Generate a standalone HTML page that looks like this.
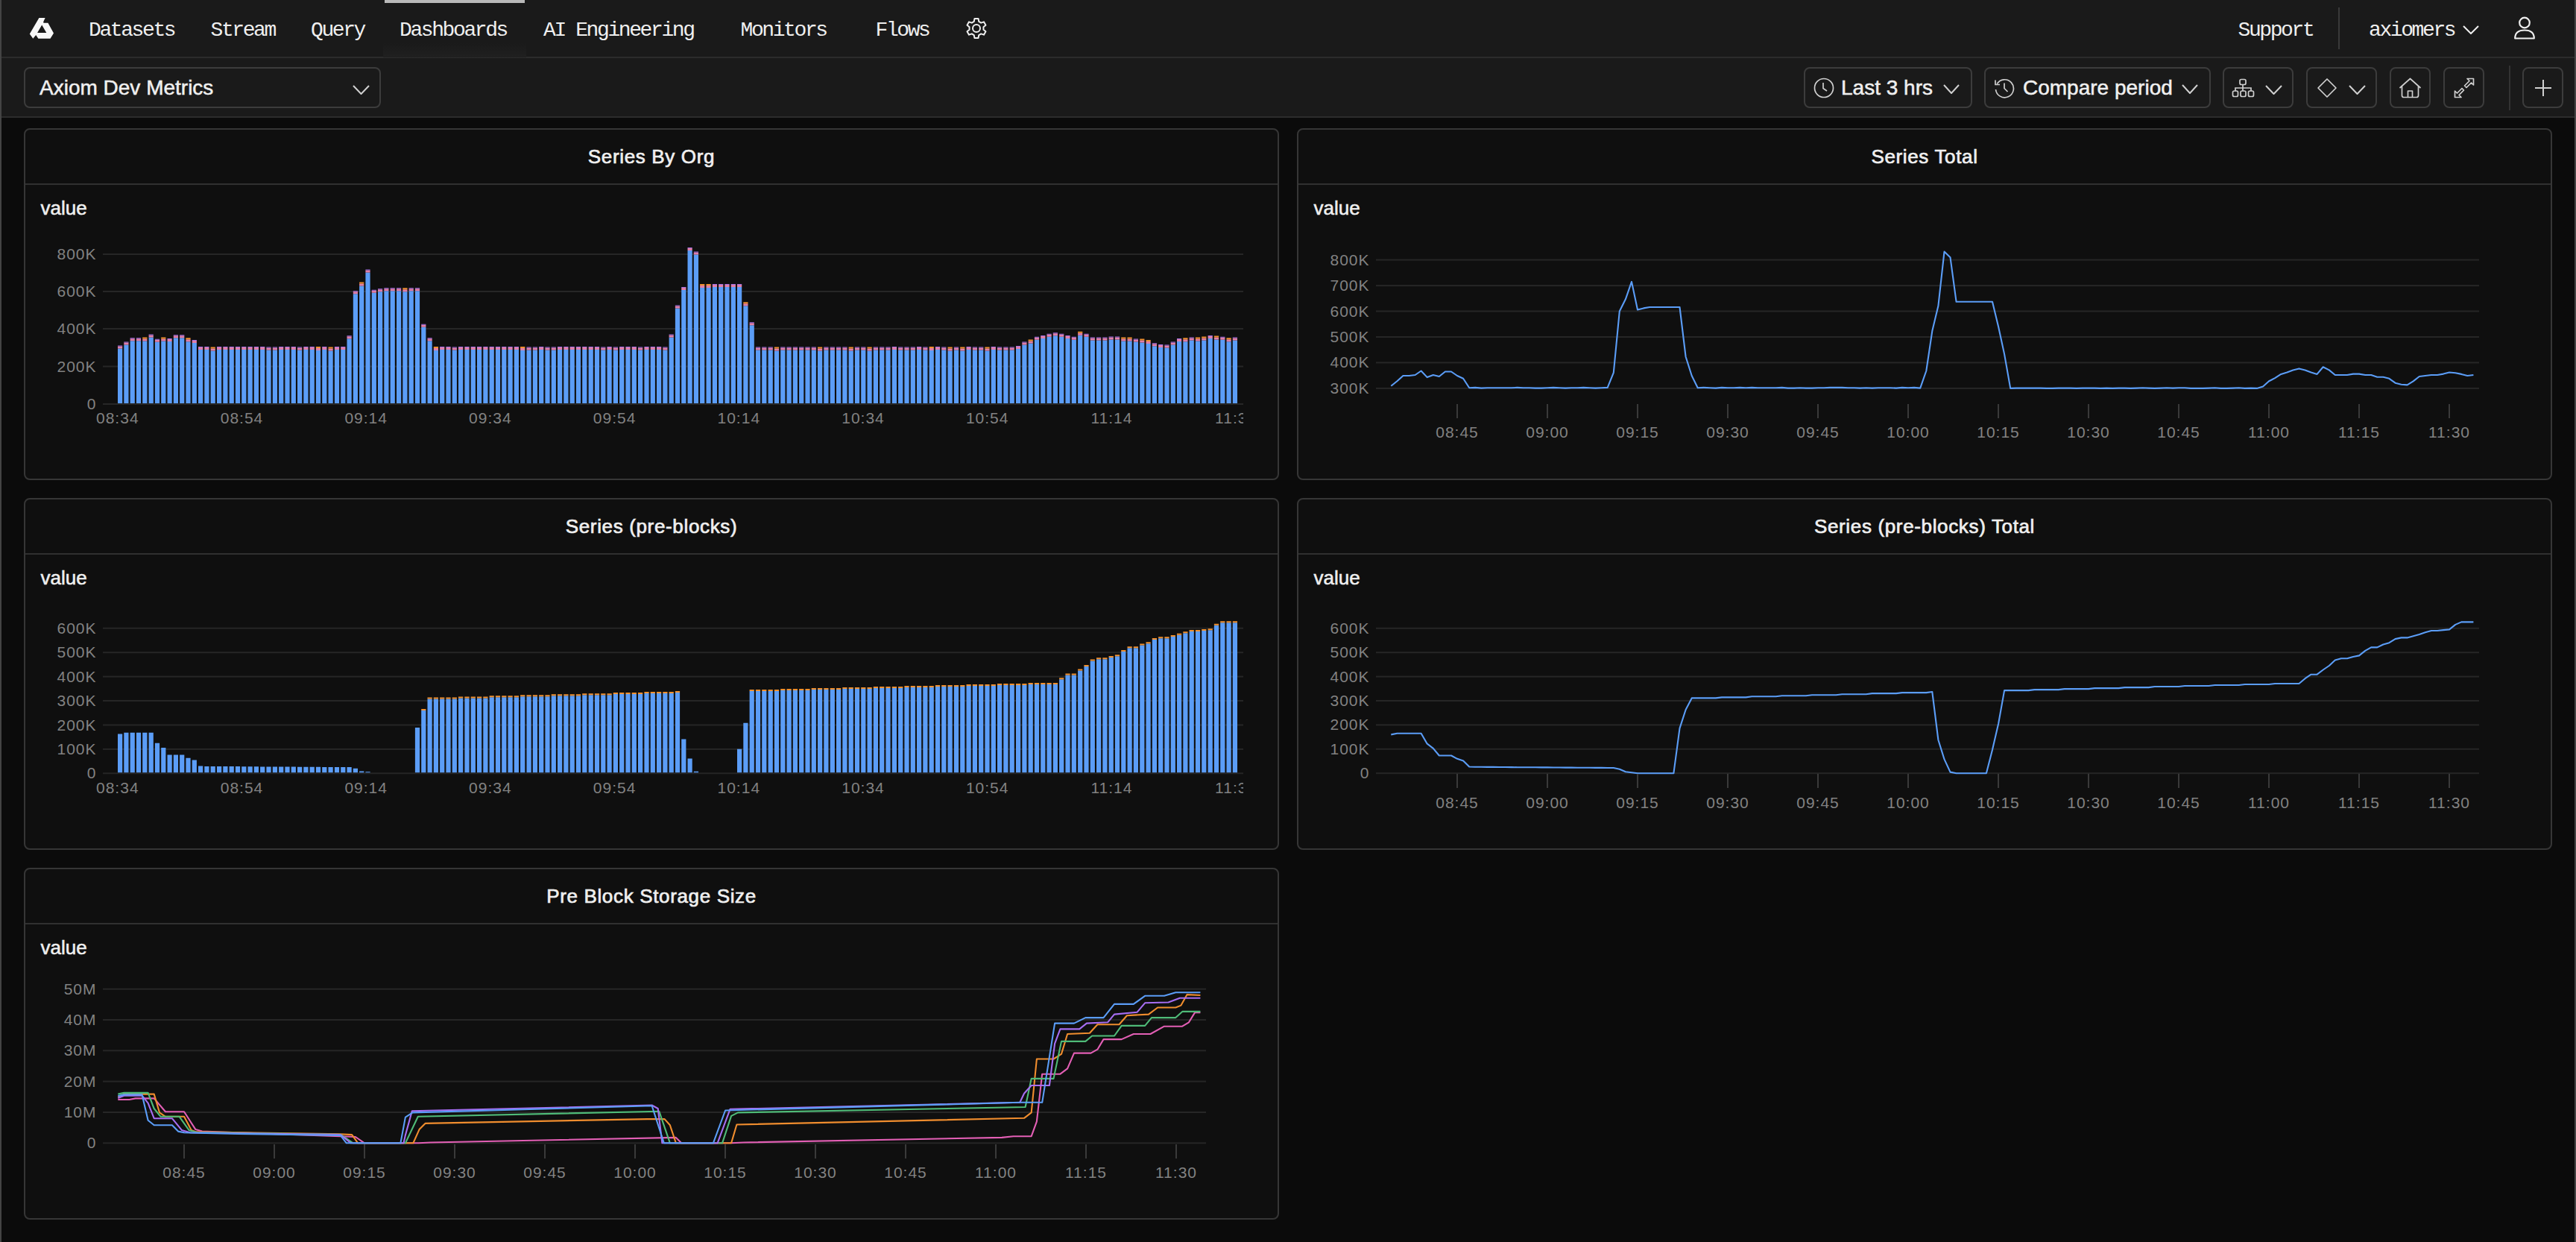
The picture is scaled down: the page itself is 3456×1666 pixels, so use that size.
<!DOCTYPE html>
<html><head><meta charset="utf-8"><style>
html,body{-webkit-font-smoothing:antialiased;margin:0;padding:0;background:#0b0b0b;width:3456px;height:1666px;overflow:hidden;position:relative;font-family:"Liberation Sans",sans-serif}
.abs{position:absolute;display:block}
.hdr{position:absolute;left:0;top:0;width:3456px;height:76px;background:#1a1a1a;border-bottom:2px solid #2c2c2c}
.tb{position:absolute;left:0;top:78px;width:3456px;height:78px;background:#1a1a1a;border-bottom:2px solid #2c2c2c}
.nav{position:absolute;top:22.5px;font-family:"Liberation Mono",monospace;font-size:28px;letter-spacing:-2.4px;line-height:36px;color:#efefef;white-space:pre}
.btn{position:absolute;top:90px;height:51px;border:2px solid #3c3c3c;border-radius:8px;background:#1a1a1a}
.ttl{position:absolute;top:100px;font-size:28px;line-height:36px;color:#f0f0f0;white-space:pre;-webkit-text-stroke:0.5px #f0f0f0}
.panel{position:absolute;width:1680px;height:468px;border:2px solid #363636;border-radius:8px;background:#0f0f0f}
.pdiv{position:absolute;left:0;top:72px;width:1680px;height:2px;background:#303030}
.frameL{position:absolute;left:0;top:0;width:2px;height:1666px;background:#444}
.frameR{position:absolute;left:3454px;top:0;width:2px;height:1666px;background:#444}
.ov{position:absolute;left:0;top:0}
</style></head><body>
<div class="hdr"></div><div class="tb"></div><div class="abs" style="left:514px;top:58px;width:192px;height:19px;background:linear-gradient(#1a1a1a,#202020)"></div><div class="abs" style="left:516px;top:0;width:188px;height:4px;background:#b9b9b9"></div><svg class="abs" style="left:34px;top:18px" width="44" height="40" viewBox="0 0 44 40"><path fill="#f8f8f8" fill-rule="evenodd" d="M18.4 6.1 L26.6 6.1 L24.2 11.3 L24.4 12.8 L30.4 12.8 L38 26.4 L33.5 33.8 L17.4 33.8 L14.2 29 L10.3 33.8 L5.8 27.4 Z M22.2 15.5 L16.1 26.1 L28.3 26.1 Z"/></svg><div class="nav" style="left:119px">Datasets</div><div class="nav" style="left:282.5px">Stream</div><div class="nav" style="left:417px">Query</div><div class="nav" style="left:536px">Dashboards</div><div class="nav" style="left:729px">AI Engineering</div><div class="nav" style="left:993.5px">Monitors</div><div class="nav" style="left:1174.5px">Flows</div><svg class="abs" style="left:1294px;top:22px" width="32" height="32" viewBox="0 0 32 32"><path fill="none" stroke="#efefef" stroke-width="2" stroke-linejoin="round" d="M12.72 6.98 L13.48 3.04 L18.52 3.04 L19.28 6.98 L22.17 8.65 L25.96 7.34 L28.48 11.70 L25.45 14.33 L25.45 17.67 L28.48 20.30 L25.96 24.66 L22.17 23.35 L19.28 25.02 L18.52 28.96 L13.48 28.96 L12.72 25.02 L9.83 23.35 L6.04 24.66 L3.52 20.30 L6.55 17.67 L6.55 14.33 L3.52 11.70 L6.04 7.34 L9.83 8.65Z"/><circle cx="16" cy="16" r="5" fill="none" stroke="#efefef" stroke-width="2"/></svg><div class="nav" style="left:3002.5px">Support</div><div class="abs" style="left:3137px;top:10px;width:2px;height:56px;background:#3a3a3a"></div><div class="nav" style="left:3178px">axiomers</div><svg class="abs" style="left:3304px;top:34px" width="22" height="12" viewBox="0 0 22 12"><path d="M1 1 L11.0 11.0 L21 1" fill="none" stroke="#efefef" stroke-width="2"/></svg><svg class="abs" style="left:3372px;top:22px" width="30" height="32" viewBox="0 0 30 32"><circle cx="15" cy="8.5" r="6.8" fill="none" stroke="#efefef" stroke-width="2.2"/><path d="M2.2 29.5 C2.2 21 8 18.5 15 18.5 C22 18.5 27.8 21 27.8 29.5 Z" fill="none" stroke="#efefef" stroke-width="2.2" stroke-linejoin="round"/></svg><div class="btn" style="left:32px;width:475px"></div><div class="ttl" style="left:53px">Axiom Dev Metrics</div><svg class="abs" style="left:473px;top:114px" width="23" height="13" viewBox="0 0 23 13"><path d="M1 1 L11.5 12.0 L22 1" fill="none" stroke="#d0d0d0" stroke-width="2"/></svg><div class="btn" style="left:2420px;width:222px"></div><svg class="abs" style="left:2432px;top:103px" width="30" height="30" viewBox="0 0 30 30"><circle cx="15" cy="15" r="12.5" fill="none" stroke="#cfcfcf" stroke-width="1.7"/><path d="M14 8 V15.5 L19 19" fill="none" stroke="#cfcfcf" stroke-width="1.7"/></svg><div class="ttl" style="left:2470px">Last 3 hrs</div><svg class="abs" style="left:2607px;top:113px" width="22" height="13" viewBox="0 0 22 13"><path d="M1 1 L11.0 12.0 L21 1" fill="none" stroke="#d0d0d0" stroke-width="2"/></svg><div class="btn" style="left:2662px;width:300px"></div><svg class="abs" style="left:2674px;top:103px" width="30" height="30" viewBox="0 0 30 30"><path d="M5.2 9.5 A12 12 0 1 1 3.5 17" fill="none" stroke="#cfcfcf" stroke-width="1.7"/><path d="M3 4.5 V10.5 H9" fill="none" stroke="#cfcfcf" stroke-width="1.7"/><path d="M15 8.5 V15.5 L19.5 20" fill="none" stroke="#cfcfcf" stroke-width="1.7"/></svg><div class="ttl" style="left:2714px">Compare period</div><svg class="abs" style="left:2927px;top:113px" width="22" height="13" viewBox="0 0 22 13"><path d="M1 1 L11.0 12.0 L21 1" fill="none" stroke="#d0d0d0" stroke-width="2"/></svg><div class="btn" style="left:2982px;width:91px"></div><svg class="abs" style="left:2994px;top:105px" width="32" height="26" viewBox="0 0 32 26"><g fill="none" stroke="#cfcfcf" stroke-width="1.7"><rect x="11" y="1.5" width="8" height="7" rx="2"/><rect x="1.5" y="17" width="7" height="7.5" rx="2"/><rect x="12" y="17" width="7" height="7.5" rx="2"/><rect x="22.5" y="17" width="7" height="7.5" rx="2"/><path d="M15 8.5 V17 M5 17 V13 H26 V17"/></g></svg><svg class="abs" style="left:3039px;top:114px" width="23" height="13" viewBox="0 0 23 13"><path d="M1 1 L11.5 12.0 L22 1" fill="none" stroke="#d0d0d0" stroke-width="2"/></svg><div class="btn" style="left:3094px;width:91px"></div><svg class="abs" style="left:3108px;top:104px" width="28" height="28" viewBox="0 0 28 28"><path d="M14 2 L26 14 L14 26 L2 14 Z" fill="none" stroke="#cfcfcf" stroke-width="1.7" stroke-linejoin="round"/></svg><svg class="abs" style="left:3151px;top:114px" width="23" height="13" viewBox="0 0 23 13"><path d="M1 1 L11.5 12.0 L22 1" fill="none" stroke="#d0d0d0" stroke-width="2"/></svg><div class="btn" style="left:3206px;width:51px"></div><svg class="abs" style="left:3218px;top:104px" width="31" height="28" viewBox="0 0 31 28"><path d="M1.5 14 L15.5 1.5 L29.5 14 M4.5 12 V24 Q4.5 26.5 7 26.5 H24 Q26.5 26.5 26.5 24 V12 M12.5 26.5 V18 H18.5 V26.5" fill="none" stroke="#cfcfcf" stroke-width="1.7" stroke-linejoin="round"/></svg><div class="btn" style="left:3278px;width:51px"></div><svg class="abs" style="left:3292px;top:104px" width="28" height="28" viewBox="0 0 28 28"><g fill="none" stroke="#cfcfcf" stroke-width="1.7" stroke-linejoin="round"><path d="M18 1.5 H26.5 V10 L23.5 7 L17 13.5 L14.5 11 L21 4.5 Z"/><path d="M10 26.5 H1.5 V18 L4.5 21 L11 14.5 L13.5 17 L7 23.5 Z"/></g></svg><div class="abs" style="left:3366px;top:88px;width:2px;height:60px;background:#333"></div><div class="btn" style="left:3384px;width:51px"></div><svg class="abs" style="left:3401px;top:107px" width="22" height="22" viewBox="0 0 22 22"><path d="M11 0 V22 M0 11 H22" stroke="#d0d0d0" stroke-width="2"/></svg><div class="panel" style="left:32px;top:172px"><div class="pdiv"></div></div><div class="panel" style="left:1740px;top:172px"><div class="pdiv"></div></div><div class="panel" style="left:32px;top:668px"><div class="pdiv"></div></div><div class="panel" style="left:1740px;top:668px"><div class="pdiv"></div></div><div class="panel" style="left:32px;top:1164px"><div class="pdiv"></div></div><svg class="ov" width="3456" height="1666" viewBox="0 0 3456 1666"><text stroke="#efefef" stroke-width="0.7" x="874.0" y="219.0" font-size="26" fill="#efefef" text-anchor="middle" font-weight="normal" font-family="Liberation Sans" letter-spacing="0.65">Series By Org</text><text stroke="#efefef" stroke-width="0.55" x="54.6" y="288.0" font-size="26" fill="#efefef" text-anchor="start" font-weight="normal" font-family="Liberation Sans" letter-spacing="0">value</text><text stroke="#efefef" stroke-width="0.7" x="2582.0" y="219.0" font-size="26" fill="#efefef" text-anchor="middle" font-weight="normal" font-family="Liberation Sans" letter-spacing="0.65">Series Total</text><text stroke="#efefef" stroke-width="0.55" x="1762.6" y="288.0" font-size="26" fill="#efefef" text-anchor="start" font-weight="normal" font-family="Liberation Sans" letter-spacing="0">value</text><text stroke="#efefef" stroke-width="0.7" x="874.0" y="715.0" font-size="26" fill="#efefef" text-anchor="middle" font-weight="normal" font-family="Liberation Sans" letter-spacing="0.65">Series (pre-blocks)</text><text stroke="#efefef" stroke-width="0.55" x="54.6" y="784.0" font-size="26" fill="#efefef" text-anchor="start" font-weight="normal" font-family="Liberation Sans" letter-spacing="0">value</text><text stroke="#efefef" stroke-width="0.7" x="2582.0" y="715.0" font-size="26" fill="#efefef" text-anchor="middle" font-weight="normal" font-family="Liberation Sans" letter-spacing="0.65">Series (pre-blocks) Total</text><text stroke="#efefef" stroke-width="0.55" x="1762.6" y="784.0" font-size="26" fill="#efefef" text-anchor="start" font-weight="normal" font-family="Liberation Sans" letter-spacing="0">value</text><text stroke="#efefef" stroke-width="0.7" x="874.0" y="1211.0" font-size="26" fill="#efefef" text-anchor="middle" font-weight="normal" font-family="Liberation Sans" letter-spacing="0.65">Pre Block Storage Size</text><text stroke="#efefef" stroke-width="0.55" x="54.6" y="1280.0" font-size="26" fill="#efefef" text-anchor="start" font-weight="normal" font-family="Liberation Sans" letter-spacing="0">value</text><rect x="138.0" y="340.0" width="1530.0" height="2" fill="#262626"/><rect x="138.0" y="390.0" width="1530.0" height="2" fill="#262626"/><rect x="138.0" y="440.0" width="1530.0" height="2" fill="#262626"/><rect x="138.0" y="490.5" width="1530.0" height="2" fill="#262626"/><rect x="138.0" y="541.0" width="1530.0" height="2" fill="#262626"/><text x="129.5" y="348.0" font-size="21" fill="#828282" text-anchor="end" font-weight="normal" font-family="Liberation Sans" letter-spacing="1">800K</text><text x="129.5" y="398.0" font-size="21" fill="#828282" text-anchor="end" font-weight="normal" font-family="Liberation Sans" letter-spacing="1">600K</text><text x="129.5" y="448.0" font-size="21" fill="#828282" text-anchor="end" font-weight="normal" font-family="Liberation Sans" letter-spacing="1">400K</text><text x="129.5" y="498.5" font-size="21" fill="#828282" text-anchor="end" font-weight="normal" font-family="Liberation Sans" letter-spacing="1">200K</text><text x="129.5" y="549.0" font-size="21" fill="#828282" text-anchor="end" font-weight="normal" font-family="Liberation Sans" letter-spacing="1">0</text><path fill="#5b9df7" d="M158.0 467.4h6.2v73.6h-6.2zM166.3 462.6h6.2v78.4h-6.2zM174.6 457.3h6.2v83.7h-6.2zM182.9 457.3h6.2v83.7h-6.2zM191.2 457.6h6.2v83.4h-6.2zM199.6 452.5h6.2v88.5h-6.2zM207.9 458.8h6.2v82.2h-6.2zM216.2 457.6h6.2v83.4h-6.2zM224.5 458.1h6.2v82.9h-6.2zM232.8 453.3h6.2v87.7h-6.2zM241.1 453.3h6.2v87.7h-6.2zM249.4 458.3h6.2v82.7h-6.2zM257.7 460.1h6.2v80.9h-6.2zM266.0 469.1h6.2v71.9h-6.2zM274.3 468.9h6.2v72.1h-6.2zM282.6 470.4h6.2v70.6h-6.2zM291.0 469.1h6.2v71.9h-6.2zM299.3 469.1h6.2v71.9h-6.2zM307.6 469.1h6.2v71.9h-6.2zM315.9 469.1h6.2v71.9h-6.2zM324.2 469.1h6.2v71.9h-6.2zM332.5 468.9h6.2v72.1h-6.2zM340.8 469.1h6.2v71.9h-6.2zM349.1 469.1h6.2v71.9h-6.2zM357.4 469.4h6.2v71.6h-6.2zM365.8 469.4h6.2v71.6h-6.2zM374.1 469.1h6.2v71.9h-6.2zM382.4 468.9h6.2v72.1h-6.2zM390.7 469.1h6.2v71.9h-6.2zM399.0 469.4h6.2v71.6h-6.2zM407.3 469.1h6.2v71.9h-6.2zM415.6 469.1h6.2v71.9h-6.2zM423.9 469.9h6.2v71.1h-6.2zM432.2 469.1h6.2v71.9h-6.2zM440.5 470.4h6.2v70.6h-6.2zM448.9 469.1h6.2v71.9h-6.2zM457.2 468.9h6.2v72.1h-6.2zM465.5 454.3h6.2v86.7h-6.2zM473.8 394.2h6.2v146.7h-6.2zM482.1 383.4h6.2v157.6h-6.2zM490.4 365.4h6.2v175.6h-6.2zM498.7 392.7h6.2v148.3h-6.2zM507.0 391.2h6.2v149.8h-6.2zM515.3 390.2h6.2v150.8h-6.2zM523.6 390.2h6.2v150.8h-6.2zM532.0 390.2h6.2v150.8h-6.2zM540.3 391.2h6.2v149.8h-6.2zM548.6 390.2h6.2v150.8h-6.2zM556.9 390.2h6.2v150.8h-6.2zM565.2 438.7h6.2v102.3h-6.2zM573.5 457.3h6.2v83.7h-6.2zM581.8 470.1h6.2v70.9h-6.2zM590.1 468.9h6.2v72.1h-6.2zM598.4 469.1h6.2v71.9h-6.2zM606.7 469.4h6.2v71.6h-6.2zM615.0 468.9h6.2v72.1h-6.2zM623.4 469.1h6.2v71.9h-6.2zM631.7 469.1h6.2v71.9h-6.2zM640.0 468.9h6.2v72.1h-6.2zM648.3 469.1h6.2v71.9h-6.2zM656.6 468.9h6.2v72.1h-6.2zM664.9 469.1h6.2v71.9h-6.2zM673.2 469.1h6.2v71.9h-6.2zM681.5 469.1h6.2v71.9h-6.2zM689.8 469.1h6.2v71.9h-6.2zM698.1 469.9h6.2v71.1h-6.2zM706.5 469.4h6.2v71.6h-6.2zM714.8 469.4h6.2v71.6h-6.2zM723.1 469.1h6.2v71.9h-6.2zM731.4 469.4h6.2v71.6h-6.2zM739.7 469.4h6.2v71.6h-6.2zM748.0 469.1h6.2v71.9h-6.2zM756.3 469.1h6.2v71.9h-6.2zM764.6 468.9h6.2v72.1h-6.2zM772.9 468.9h6.2v72.1h-6.2zM781.2 468.9h6.2v72.1h-6.2zM789.6 469.1h6.2v71.9h-6.2zM797.9 469.1h6.2v71.9h-6.2zM806.2 469.4h6.2v71.6h-6.2zM814.5 469.1h6.2v71.9h-6.2zM822.8 469.4h6.2v71.6h-6.2zM831.1 469.1h6.2v71.9h-6.2zM839.4 469.1h6.2v71.9h-6.2zM847.7 469.1h6.2v71.9h-6.2zM856.0 469.4h6.2v71.6h-6.2zM864.4 468.9h6.2v72.1h-6.2zM872.7 469.1h6.2v71.9h-6.2zM881.0 468.9h6.2v72.1h-6.2zM889.3 469.4h6.2v71.6h-6.2zM897.6 452.5h6.2v88.5h-6.2zM905.9 413.6h6.2v127.4h-6.2zM914.2 389.0h6.2v152.0h-6.2zM922.5 336.0h6.2v205.0h-6.2zM930.8 341.5h6.2v199.5h-6.2zM939.1 386.0h6.2v155.0h-6.2zM947.5 386.0h6.2v155.0h-6.2zM955.8 385.0h6.2v156.0h-6.2zM964.1 385.0h6.2v156.0h-6.2zM972.4 385.0h6.2v156.0h-6.2zM980.7 385.0h6.2v156.0h-6.2zM989.0 385.0h6.2v156.0h-6.2zM997.3 410.3h6.2v130.7h-6.2zM1005.6 436.2h6.2v104.8h-6.2zM1013.9 469.6h6.2v71.4h-6.2zM1022.2 469.4h6.2v71.6h-6.2zM1030.6 469.4h6.2v71.6h-6.2zM1038.9 470.4h6.2v70.6h-6.2zM1047.2 469.4h6.2v71.6h-6.2zM1055.5 469.4h6.2v71.6h-6.2zM1063.8 469.6h6.2v71.4h-6.2zM1072.1 469.6h6.2v71.4h-6.2zM1080.4 469.4h6.2v71.6h-6.2zM1088.7 469.4h6.2v71.6h-6.2zM1097.0 470.4h6.2v70.6h-6.2zM1105.3 469.6h6.2v71.4h-6.2zM1113.7 469.4h6.2v71.6h-6.2zM1122.0 469.4h6.2v71.6h-6.2zM1130.3 469.4h6.2v71.6h-6.2zM1138.6 470.6h6.2v70.4h-6.2zM1146.9 469.4h6.2v71.6h-6.2zM1155.2 469.6h6.2v71.4h-6.2zM1163.5 470.4h6.2v70.6h-6.2zM1171.8 469.4h6.2v71.6h-6.2zM1180.1 469.6h6.2v71.4h-6.2zM1188.4 469.4h6.2v71.6h-6.2zM1196.8 469.1h6.2v71.9h-6.2zM1205.1 469.4h6.2v71.6h-6.2zM1213.4 469.6h6.2v71.4h-6.2zM1221.7 469.4h6.2v71.6h-6.2zM1230.0 469.1h6.2v71.9h-6.2zM1238.3 469.4h6.2v71.6h-6.2zM1246.6 470.1h6.2v70.9h-6.2zM1254.9 469.1h6.2v71.9h-6.2zM1263.2 469.6h6.2v71.4h-6.2zM1271.5 470.6h6.2v70.4h-6.2zM1279.9 469.6h6.2v71.4h-6.2zM1288.2 470.4h6.2v70.6h-6.2zM1296.5 469.1h6.2v71.9h-6.2zM1304.8 469.6h6.2v71.4h-6.2zM1313.1 469.6h6.2v71.4h-6.2zM1321.4 470.4h6.2v70.6h-6.2zM1329.7 469.1h6.2v71.9h-6.2zM1338.0 469.6h6.2v71.4h-6.2zM1346.3 469.4h6.2v71.6h-6.2zM1354.6 469.6h6.2v71.4h-6.2zM1363.0 467.9h6.2v73.1h-6.2zM1371.3 462.6h6.2v78.4h-6.2zM1379.6 460.6h6.2v80.4h-6.2zM1387.9 455.8h6.2v85.2h-6.2zM1396.2 454.0h6.2v87.0h-6.2zM1404.5 451.8h6.2v89.2h-6.2zM1412.8 450.3h6.2v90.7h-6.2zM1421.1 451.8h6.2v89.2h-6.2zM1429.4 454.0h6.2v87.0h-6.2zM1437.7 455.8h6.2v85.2h-6.2zM1446.1 449.8h6.2v91.2h-6.2zM1454.4 451.8h6.2v89.2h-6.2zM1462.7 456.6h6.2v84.4h-6.2zM1471.0 456.6h6.2v84.4h-6.2zM1479.3 456.6h6.2v84.4h-6.2zM1487.6 455.6h6.2v85.4h-6.2zM1495.9 455.6h6.2v85.4h-6.2zM1504.2 457.6h6.2v83.4h-6.2zM1512.5 457.6h6.2v83.4h-6.2zM1520.8 458.6h6.2v82.4h-6.2zM1529.2 459.6h6.2v81.4h-6.2zM1537.5 461.1h6.2v79.9h-6.2zM1545.8 464.3h6.2v76.7h-6.2zM1554.1 465.9h6.2v75.1h-6.2zM1562.4 466.4h6.2v74.6h-6.2zM1570.7 462.6h6.2v78.4h-6.2zM1579.0 458.1h6.2v82.9h-6.2zM1587.3 458.3h6.2v82.7h-6.2zM1595.6 456.6h6.2v84.4h-6.2zM1603.9 457.6h6.2v83.4h-6.2zM1612.2 456.6h6.2v84.4h-6.2zM1620.6 454.0h6.2v87.0h-6.2zM1628.9 455.6h6.2v85.4h-6.2zM1637.2 455.8h6.2v85.2h-6.2zM1645.5 458.3h6.2v82.7h-6.2zM1653.8 456.6h6.2v84.4h-6.2z"/><path fill="#e07fa8" d="M158.0 464.4h6.2v3h-6.2zM166.3 459.6h6.2v3h-6.2zM174.6 454.3h6.2v3h-6.2zM182.9 454.3h6.2v3h-6.2zM191.2 454.6h6.2v3h-6.2zM199.6 449.5h6.2v3h-6.2zM207.9 455.8h6.2v3h-6.2zM216.2 454.6h6.2v3h-6.2zM224.5 455.1h6.2v3h-6.2zM232.8 450.3h6.2v3h-6.2zM241.1 450.3h6.2v3h-6.2zM249.4 455.3h6.2v3h-6.2zM257.7 457.1h6.2v3h-6.2zM266.0 466.1h6.2v3h-6.2zM274.3 465.9h6.2v3h-6.2zM282.6 467.4h6.2v3h-6.2zM291.0 466.1h6.2v3h-6.2zM299.3 466.1h6.2v3h-6.2zM307.6 466.1h6.2v3h-6.2zM315.9 466.1h6.2v3h-6.2zM324.2 466.1h6.2v3h-6.2zM332.5 465.9h6.2v3h-6.2zM340.8 466.1h6.2v3h-6.2zM349.1 466.1h6.2v3h-6.2zM357.4 466.4h6.2v3h-6.2zM365.8 466.4h6.2v3h-6.2zM374.1 466.1h6.2v3h-6.2zM382.4 465.9h6.2v3h-6.2zM390.7 466.1h6.2v3h-6.2zM399.0 466.4h6.2v3h-6.2zM407.3 466.1h6.2v3h-6.2zM415.6 466.1h6.2v3h-6.2zM423.9 466.9h6.2v3h-6.2zM432.2 466.1h6.2v3h-6.2zM440.5 467.4h6.2v3h-6.2zM448.9 466.1h6.2v3h-6.2zM457.2 465.9h6.2v3h-6.2zM465.5 451.3h6.2v3h-6.2zM473.8 391.2h6.2v3h-6.2zM482.1 380.4h6.2v3h-6.2zM490.4 362.4h6.2v3h-6.2zM498.7 389.7h6.2v3h-6.2zM507.0 388.2h6.2v3h-6.2zM515.3 387.2h6.2v3h-6.2zM523.6 387.2h6.2v3h-6.2zM532.0 387.2h6.2v3h-6.2zM540.3 388.2h6.2v3h-6.2zM548.6 387.2h6.2v3h-6.2zM556.9 387.2h6.2v3h-6.2zM565.2 435.7h6.2v3h-6.2zM573.5 454.3h6.2v3h-6.2zM581.8 467.1h6.2v3h-6.2zM590.1 465.9h6.2v3h-6.2zM598.4 466.1h6.2v3h-6.2zM606.7 466.4h6.2v3h-6.2zM615.0 465.9h6.2v3h-6.2zM623.4 466.1h6.2v3h-6.2zM631.7 466.1h6.2v3h-6.2zM640.0 465.9h6.2v3h-6.2zM648.3 466.1h6.2v3h-6.2zM656.6 465.9h6.2v3h-6.2zM664.9 466.1h6.2v3h-6.2zM673.2 466.1h6.2v3h-6.2zM681.5 466.1h6.2v3h-6.2zM689.8 466.1h6.2v3h-6.2zM698.1 466.9h6.2v3h-6.2zM706.5 466.4h6.2v3h-6.2zM714.8 466.4h6.2v3h-6.2zM723.1 466.1h6.2v3h-6.2zM731.4 466.4h6.2v3h-6.2zM739.7 466.4h6.2v3h-6.2zM748.0 466.1h6.2v3h-6.2zM756.3 466.1h6.2v3h-6.2zM764.6 465.9h6.2v3h-6.2zM772.9 465.9h6.2v3h-6.2zM781.2 465.9h6.2v3h-6.2zM789.6 466.1h6.2v3h-6.2zM797.9 466.1h6.2v3h-6.2zM806.2 466.4h6.2v3h-6.2zM814.5 466.1h6.2v3h-6.2zM822.8 466.4h6.2v3h-6.2zM831.1 466.1h6.2v3h-6.2zM839.4 466.1h6.2v3h-6.2zM847.7 466.1h6.2v3h-6.2zM856.0 466.4h6.2v3h-6.2zM864.4 465.9h6.2v3h-6.2zM872.7 466.1h6.2v3h-6.2zM881.0 465.9h6.2v3h-6.2zM889.3 466.4h6.2v3h-6.2zM897.6 449.5h6.2v3h-6.2zM905.9 410.6h6.2v3h-6.2zM914.2 386.0h6.2v3h-6.2zM922.5 333.0h6.2v3h-6.2zM930.8 338.5h6.2v3h-6.2zM939.1 383.0h6.2v3h-6.2zM947.5 383.0h6.2v3h-6.2zM955.8 382.0h6.2v3h-6.2zM964.1 382.0h6.2v3h-6.2zM972.4 382.0h6.2v3h-6.2zM980.7 382.0h6.2v3h-6.2zM989.0 382.0h6.2v3h-6.2zM997.3 407.3h6.2v3h-6.2zM1005.6 433.2h6.2v3h-6.2zM1013.9 466.6h6.2v3h-6.2zM1022.2 466.4h6.2v3h-6.2zM1030.6 466.4h6.2v3h-6.2zM1038.9 467.4h6.2v3h-6.2zM1047.2 466.4h6.2v3h-6.2zM1055.5 466.4h6.2v3h-6.2zM1063.8 466.6h6.2v3h-6.2zM1072.1 466.6h6.2v3h-6.2zM1080.4 466.4h6.2v3h-6.2zM1088.7 466.4h6.2v3h-6.2zM1097.0 467.4h6.2v3h-6.2zM1105.3 466.6h6.2v3h-6.2zM1113.7 466.4h6.2v3h-6.2zM1122.0 466.4h6.2v3h-6.2zM1130.3 466.4h6.2v3h-6.2zM1138.6 467.6h6.2v3h-6.2zM1146.9 466.4h6.2v3h-6.2zM1155.2 466.6h6.2v3h-6.2zM1163.5 467.4h6.2v3h-6.2zM1171.8 466.4h6.2v3h-6.2zM1180.1 466.6h6.2v3h-6.2zM1188.4 466.4h6.2v3h-6.2zM1196.8 466.1h6.2v3h-6.2zM1205.1 466.4h6.2v3h-6.2zM1213.4 466.6h6.2v3h-6.2zM1221.7 466.4h6.2v3h-6.2zM1230.0 466.1h6.2v3h-6.2zM1238.3 466.4h6.2v3h-6.2zM1246.6 467.1h6.2v3h-6.2zM1254.9 466.1h6.2v3h-6.2zM1263.2 466.6h6.2v3h-6.2zM1271.5 467.6h6.2v3h-6.2zM1279.9 466.6h6.2v3h-6.2zM1288.2 467.4h6.2v3h-6.2zM1296.5 466.1h6.2v3h-6.2zM1304.8 466.6h6.2v3h-6.2zM1313.1 466.6h6.2v3h-6.2zM1321.4 467.4h6.2v3h-6.2zM1329.7 466.1h6.2v3h-6.2zM1338.0 466.6h6.2v3h-6.2zM1346.3 466.4h6.2v3h-6.2zM1354.6 466.6h6.2v3h-6.2zM1363.0 464.9h6.2v3h-6.2zM1371.3 459.6h6.2v3h-6.2zM1379.6 457.6h6.2v3h-6.2zM1387.9 452.8h6.2v3h-6.2zM1396.2 451.0h6.2v3h-6.2zM1404.5 448.8h6.2v3h-6.2zM1412.8 447.3h6.2v3h-6.2zM1421.1 448.8h6.2v3h-6.2zM1429.4 451.0h6.2v3h-6.2zM1437.7 452.8h6.2v3h-6.2zM1446.1 446.8h6.2v3h-6.2zM1454.4 448.8h6.2v3h-6.2zM1462.7 453.6h6.2v3h-6.2zM1471.0 453.6h6.2v3h-6.2zM1479.3 453.6h6.2v3h-6.2zM1487.6 452.6h6.2v3h-6.2zM1495.9 452.6h6.2v3h-6.2zM1504.2 454.6h6.2v3h-6.2zM1512.5 454.6h6.2v3h-6.2zM1520.8 455.6h6.2v3h-6.2zM1529.2 456.6h6.2v3h-6.2zM1537.5 458.1h6.2v3h-6.2zM1545.8 461.3h6.2v3h-6.2zM1554.1 462.9h6.2v3h-6.2zM1562.4 463.4h6.2v3h-6.2zM1570.7 459.6h6.2v3h-6.2zM1579.0 455.1h6.2v3h-6.2zM1587.3 455.3h6.2v3h-6.2zM1595.6 453.6h6.2v3h-6.2zM1603.9 454.6h6.2v3h-6.2zM1612.2 453.6h6.2v3h-6.2zM1620.6 451.0h6.2v3h-6.2zM1628.9 452.6h6.2v3h-6.2zM1637.2 452.8h6.2v3h-6.2zM1645.5 455.3h6.2v3h-6.2zM1653.8 453.6h6.2v3h-6.2z"/><path fill="#f0902f" d="M191.2 452.6h6.2v2h-6.2zM216.2 452.6h6.2v2h-6.2zM249.4 453.3h6.2v2h-6.2zM282.6 465.4h6.2v2h-6.2zM423.9 464.9h6.2v2h-6.2zM440.5 465.4h6.2v2h-6.2zM482.1 378.4h6.2v2h-6.2zM540.3 386.2h6.2v2h-6.2zM581.8 465.1h6.2v2h-6.2zM698.1 464.9h6.2v2h-6.2zM939.1 381.0h6.2v2h-6.2zM947.5 381.0h6.2v2h-6.2zM997.3 405.3h6.2v2h-6.2zM1038.9 465.4h6.2v2h-6.2zM1097.0 465.4h6.2v2h-6.2zM1138.6 465.6h6.2v2h-6.2zM1163.5 465.4h6.2v2h-6.2zM1246.6 465.1h6.2v2h-6.2zM1271.5 465.6h6.2v2h-6.2zM1288.2 465.4h6.2v2h-6.2zM1321.4 465.4h6.2v2h-6.2zM1379.6 455.6h6.2v2h-6.2zM1446.1 444.8h6.2v2h-6.2zM1504.2 452.6h6.2v2h-6.2zM1512.5 452.6h6.2v2h-6.2zM1529.2 454.6h6.2v2h-6.2zM1537.5 456.1h6.2v2h-6.2zM1587.3 453.3h6.2v2h-6.2zM1603.9 452.6h6.2v2h-6.2zM1612.2 451.6h6.2v2h-6.2zM1628.9 450.6h6.2v2h-6.2zM1645.5 453.3h6.2v2h-6.2z"/><path fill="#a472ea" d="M158.0 463.4h6.2v1h-6.2zM166.3 458.6h6.2v1h-6.2zM174.6 453.3h6.2v1h-6.2zM182.9 453.3h6.2v1h-6.2zM199.6 448.5h6.2v1h-6.2zM207.9 454.8h6.2v1h-6.2zM224.5 454.1h6.2v1h-6.2zM232.8 449.3h6.2v1h-6.2zM241.1 449.3h6.2v1h-6.2zM257.7 456.1h6.2v1h-6.2zM266.0 465.1h6.2v1h-6.2zM274.3 464.9h6.2v1h-6.2zM291.0 465.1h6.2v1h-6.2zM299.3 465.1h6.2v1h-6.2zM307.6 465.1h6.2v1h-6.2zM315.9 465.1h6.2v1h-6.2zM324.2 465.1h6.2v1h-6.2zM332.5 464.9h6.2v1h-6.2zM340.8 465.1h6.2v1h-6.2zM349.1 465.1h6.2v1h-6.2zM357.4 465.4h6.2v1h-6.2zM365.8 465.4h6.2v1h-6.2zM374.1 465.1h6.2v1h-6.2zM382.4 464.9h6.2v1h-6.2zM390.7 465.1h6.2v1h-6.2zM399.0 465.4h6.2v1h-6.2zM407.3 465.1h6.2v1h-6.2zM415.6 465.1h6.2v1h-6.2zM432.2 465.1h6.2v1h-6.2zM448.9 465.1h6.2v1h-6.2zM457.2 464.9h6.2v1h-6.2zM465.5 450.3h6.2v1h-6.2zM473.8 390.2h6.2v1h-6.2zM490.4 361.4h6.2v1h-6.2zM498.7 388.7h6.2v1h-6.2zM507.0 387.2h6.2v1h-6.2zM515.3 386.2h6.2v1h-6.2zM523.6 386.2h6.2v1h-6.2zM532.0 386.2h6.2v1h-6.2zM548.6 386.2h6.2v1h-6.2zM556.9 386.2h6.2v1h-6.2zM565.2 434.7h6.2v1h-6.2zM573.5 453.3h6.2v1h-6.2zM590.1 464.9h6.2v1h-6.2zM598.4 465.1h6.2v1h-6.2zM606.7 465.4h6.2v1h-6.2zM615.0 464.9h6.2v1h-6.2zM623.4 465.1h6.2v1h-6.2zM631.7 465.1h6.2v1h-6.2zM640.0 464.9h6.2v1h-6.2zM648.3 465.1h6.2v1h-6.2zM656.6 464.9h6.2v1h-6.2zM664.9 465.1h6.2v1h-6.2zM673.2 465.1h6.2v1h-6.2zM681.5 465.1h6.2v1h-6.2zM689.8 465.1h6.2v1h-6.2zM706.5 465.4h6.2v1h-6.2zM714.8 465.4h6.2v1h-6.2zM723.1 465.1h6.2v1h-6.2zM731.4 465.4h6.2v1h-6.2zM739.7 465.4h6.2v1h-6.2zM748.0 465.1h6.2v1h-6.2zM756.3 465.1h6.2v1h-6.2zM764.6 464.9h6.2v1h-6.2zM772.9 464.9h6.2v1h-6.2zM781.2 464.9h6.2v1h-6.2zM789.6 465.1h6.2v1h-6.2zM797.9 465.1h6.2v1h-6.2zM806.2 465.4h6.2v1h-6.2zM814.5 465.1h6.2v1h-6.2zM822.8 465.4h6.2v1h-6.2zM831.1 465.1h6.2v1h-6.2zM839.4 465.1h6.2v1h-6.2zM847.7 465.1h6.2v1h-6.2zM856.0 465.4h6.2v1h-6.2zM864.4 464.9h6.2v1h-6.2zM872.7 465.1h6.2v1h-6.2zM881.0 464.9h6.2v1h-6.2zM889.3 465.4h6.2v1h-6.2zM897.6 448.5h6.2v1h-6.2zM905.9 409.6h6.2v1h-6.2zM914.2 385.0h6.2v1h-6.2zM922.5 332.0h6.2v1h-6.2zM930.8 337.5h6.2v1h-6.2zM955.8 381.0h6.2v1h-6.2zM964.1 381.0h6.2v1h-6.2zM972.4 381.0h6.2v1h-6.2zM980.7 381.0h6.2v1h-6.2zM989.0 381.0h6.2v1h-6.2zM1005.6 432.2h6.2v1h-6.2zM1013.9 465.6h6.2v1h-6.2zM1022.2 465.4h6.2v1h-6.2zM1030.6 465.4h6.2v1h-6.2zM1047.2 465.4h6.2v1h-6.2zM1055.5 465.4h6.2v1h-6.2zM1063.8 465.6h6.2v1h-6.2zM1072.1 465.6h6.2v1h-6.2zM1080.4 465.4h6.2v1h-6.2zM1088.7 465.4h6.2v1h-6.2zM1105.3 465.6h6.2v1h-6.2zM1113.7 465.4h6.2v1h-6.2zM1122.0 465.4h6.2v1h-6.2zM1130.3 465.4h6.2v1h-6.2zM1146.9 465.4h6.2v1h-6.2zM1155.2 465.6h6.2v1h-6.2zM1171.8 465.4h6.2v1h-6.2zM1180.1 465.6h6.2v1h-6.2zM1188.4 465.4h6.2v1h-6.2zM1196.8 465.1h6.2v1h-6.2zM1205.1 465.4h6.2v1h-6.2zM1213.4 465.6h6.2v1h-6.2zM1221.7 465.4h6.2v1h-6.2zM1230.0 465.1h6.2v1h-6.2zM1238.3 465.4h6.2v1h-6.2zM1254.9 465.1h6.2v1h-6.2zM1263.2 465.6h6.2v1h-6.2zM1279.9 465.6h6.2v1h-6.2zM1296.5 465.1h6.2v1h-6.2zM1304.8 465.6h6.2v1h-6.2zM1313.1 465.6h6.2v1h-6.2zM1329.7 465.1h6.2v1h-6.2zM1338.0 465.6h6.2v1h-6.2zM1346.3 465.4h6.2v1h-6.2zM1354.6 465.6h6.2v1h-6.2zM1363.0 463.9h6.2v1h-6.2zM1371.3 458.6h6.2v1h-6.2zM1387.9 451.8h6.2v1h-6.2zM1396.2 450.0h6.2v1h-6.2zM1404.5 447.8h6.2v1h-6.2zM1412.8 446.3h6.2v1h-6.2zM1421.1 447.8h6.2v1h-6.2zM1429.4 450.0h6.2v1h-6.2zM1437.7 451.8h6.2v1h-6.2zM1454.4 447.8h6.2v1h-6.2zM1462.7 452.6h6.2v1h-6.2zM1471.0 452.6h6.2v1h-6.2zM1479.3 452.6h6.2v1h-6.2zM1487.6 451.6h6.2v1h-6.2zM1495.9 451.6h6.2v1h-6.2zM1520.8 454.6h6.2v1h-6.2zM1545.8 460.3h6.2v1h-6.2zM1554.1 461.9h6.2v1h-6.2zM1562.4 462.4h6.2v1h-6.2zM1570.7 458.6h6.2v1h-6.2zM1579.0 454.1h6.2v1h-6.2zM1595.6 452.6h6.2v1h-6.2zM1620.6 450.0h6.2v1h-6.2zM1637.2 451.8h6.2v1h-6.2zM1653.8 452.6h6.2v1h-6.2z"/><text x="157.8" y="567.6" font-size="21" fill="#828282" text-anchor="middle" font-weight="normal" font-family="Liberation Sans" letter-spacing="1">08:34</text><text x="324.5" y="567.6" font-size="21" fill="#828282" text-anchor="middle" font-weight="normal" font-family="Liberation Sans" letter-spacing="1">08:54</text><text x="491.2" y="567.6" font-size="21" fill="#828282" text-anchor="middle" font-weight="normal" font-family="Liberation Sans" letter-spacing="1">09:14</text><text x="657.9" y="567.6" font-size="21" fill="#828282" text-anchor="middle" font-weight="normal" font-family="Liberation Sans" letter-spacing="1">09:34</text><text x="824.6" y="567.6" font-size="21" fill="#828282" text-anchor="middle" font-weight="normal" font-family="Liberation Sans" letter-spacing="1">09:54</text><text x="991.3" y="567.6" font-size="21" fill="#828282" text-anchor="middle" font-weight="normal" font-family="Liberation Sans" letter-spacing="1">10:14</text><text x="1158.0" y="567.6" font-size="21" fill="#828282" text-anchor="middle" font-weight="normal" font-family="Liberation Sans" letter-spacing="1">10:34</text><text x="1324.7" y="567.6" font-size="21" fill="#828282" text-anchor="middle" font-weight="normal" font-family="Liberation Sans" letter-spacing="1">10:54</text><text x="1491.4" y="567.6" font-size="21" fill="#828282" text-anchor="middle" font-weight="normal" font-family="Liberation Sans" letter-spacing="1">11:14</text><svg x="0" y="0" width="1668" height="1666" overflow="hidden"><text x="1658.1" y="567.6" font-size="21" fill="#828282" text-anchor="middle" font-weight="normal" font-family="Liberation Sans" letter-spacing="1">11:34</text></svg><rect x="138.0" y="841.7" width="1530.0" height="2" fill="#262626"/><rect x="138.0" y="874.2" width="1530.0" height="2" fill="#262626"/><rect x="138.0" y="906.6" width="1530.0" height="2" fill="#262626"/><rect x="138.0" y="939.0" width="1530.0" height="2" fill="#262626"/><rect x="138.0" y="971.5" width="1530.0" height="2" fill="#262626"/><rect x="138.0" y="1003.9" width="1530.0" height="2" fill="#262626"/><rect x="138.0" y="1036.3" width="1530.0" height="2" fill="#262626"/><text x="129.5" y="849.7" font-size="21" fill="#828282" text-anchor="end" font-weight="normal" font-family="Liberation Sans" letter-spacing="1">600K</text><text x="129.5" y="882.2" font-size="21" fill="#828282" text-anchor="end" font-weight="normal" font-family="Liberation Sans" letter-spacing="1">500K</text><text x="129.5" y="914.6" font-size="21" fill="#828282" text-anchor="end" font-weight="normal" font-family="Liberation Sans" letter-spacing="1">400K</text><text x="129.5" y="947.0" font-size="21" fill="#828282" text-anchor="end" font-weight="normal" font-family="Liberation Sans" letter-spacing="1">300K</text><text x="129.5" y="979.5" font-size="21" fill="#828282" text-anchor="end" font-weight="normal" font-family="Liberation Sans" letter-spacing="1">200K</text><text x="129.5" y="1011.9" font-size="21" fill="#828282" text-anchor="end" font-weight="normal" font-family="Liberation Sans" letter-spacing="1">100K</text><text x="129.5" y="1044.3" font-size="21" fill="#828282" text-anchor="end" font-weight="normal" font-family="Liberation Sans" letter-spacing="1">0</text><path fill="#5b9df7" d="M158.0 984.4h6.2v51.9h-6.2zM166.3 982.8h6.2v53.5h-6.2zM174.6 982.8h6.2v53.5h-6.2zM182.9 982.8h6.2v53.5h-6.2zM191.2 982.8h6.2v53.5h-6.2zM199.6 982.8h6.2v53.5h-6.2zM207.9 996.7h6.2v39.6h-6.2zM216.2 1002.9h6.2v33.4h-6.2zM224.5 1012.6h6.2v23.7h-6.2zM232.8 1012.6h6.2v23.7h-6.2zM241.1 1012.6h6.2v23.7h-6.2zM249.4 1016.8h6.2v19.5h-6.2zM257.7 1019.4h6.2v16.9h-6.2zM266.0 1027.5h6.2v8.8h-6.2zM274.3 1027.9h6.2v8.4h-6.2zM282.6 1027.9h6.2v8.4h-6.2zM291.0 1028.0h6.2v8.3h-6.2zM299.3 1028.0h6.2v8.3h-6.2zM307.6 1028.1h6.2v8.2h-6.2zM315.9 1028.1h6.2v8.2h-6.2zM324.2 1028.2h6.2v8.1h-6.2zM332.5 1028.2h6.2v8.1h-6.2zM340.8 1028.3h6.2v8.0h-6.2zM349.1 1028.4h6.2v7.9h-6.2zM357.4 1028.4h6.2v7.9h-6.2zM365.8 1028.5h6.2v7.8h-6.2zM374.1 1028.5h6.2v7.8h-6.2zM382.4 1028.6h6.2v7.7h-6.2zM390.7 1028.6h6.2v7.7h-6.2zM399.0 1028.7h6.2v7.6h-6.2zM407.3 1028.7h6.2v7.6h-6.2zM415.6 1028.8h6.2v7.5h-6.2zM423.9 1028.8h6.2v7.5h-6.2zM432.2 1028.9h6.2v7.4h-6.2zM440.5 1028.9h6.2v7.4h-6.2zM448.9 1029.0h6.2v7.3h-6.2zM457.2 1029.1h6.2v7.2h-6.2zM465.5 1029.1h6.2v7.2h-6.2zM473.8 1030.8h6.2v5.5h-6.2zM482.1 1034.4h6.2v1.9h-6.2zM490.4 1035.3h6.2v1.0h-6.2zM556.9 976.0h6.2v60.3h-6.2zM565.2 953.0h6.2v83.3h-6.2zM573.5 937.4h6.2v98.9h-6.2zM581.8 937.4h6.2v98.9h-6.2zM590.1 937.4h6.2v98.9h-6.2zM598.4 937.4h6.2v98.9h-6.2zM606.7 937.4h6.2v98.9h-6.2zM615.0 936.4h6.2v99.9h-6.2zM623.4 936.4h6.2v99.9h-6.2zM631.7 936.4h6.2v99.9h-6.2zM640.0 936.4h6.2v99.9h-6.2zM648.3 936.4h6.2v99.9h-6.2zM656.6 935.3h6.2v101.0h-6.2zM664.9 935.3h6.2v101.0h-6.2zM673.2 935.3h6.2v101.0h-6.2zM681.5 935.3h6.2v101.0h-6.2zM689.8 935.3h6.2v101.0h-6.2zM698.1 934.3h6.2v102.0h-6.2zM706.5 934.3h6.2v102.0h-6.2zM714.8 934.3h6.2v102.0h-6.2zM723.1 934.3h6.2v102.0h-6.2zM731.4 934.3h6.2v102.0h-6.2zM739.7 933.2h6.2v103.1h-6.2zM748.0 933.2h6.2v103.1h-6.2zM756.3 933.2h6.2v103.1h-6.2zM764.6 933.2h6.2v103.1h-6.2zM772.9 933.2h6.2v103.1h-6.2zM781.2 932.2h6.2v104.1h-6.2zM789.6 932.2h6.2v104.1h-6.2zM797.9 932.2h6.2v104.1h-6.2zM806.2 932.2h6.2v104.1h-6.2zM814.5 932.2h6.2v104.1h-6.2zM822.8 931.1h6.2v105.2h-6.2zM831.1 931.1h6.2v105.2h-6.2zM839.4 931.1h6.2v105.2h-6.2zM847.7 931.1h6.2v105.2h-6.2zM856.0 931.1h6.2v105.2h-6.2zM864.4 930.1h6.2v106.2h-6.2zM872.7 930.1h6.2v106.2h-6.2zM881.0 930.1h6.2v106.2h-6.2zM889.3 930.1h6.2v106.2h-6.2zM897.6 930.1h6.2v106.2h-6.2zM905.9 929.0h6.2v107.3h-6.2zM914.2 991.5h6.2v44.8h-6.2zM922.5 1017.5h6.2v18.8h-6.2zM930.8 1034.7h6.2v1.6h-6.2zM989.0 1004.8h6.2v31.5h-6.2zM997.3 969.8h6.2v66.5h-6.2zM1005.6 927.1h6.2v109.2h-6.2zM1013.9 927.1h6.2v109.2h-6.2zM1022.2 927.1h6.2v109.2h-6.2zM1030.6 927.1h6.2v109.2h-6.2zM1038.9 927.1h6.2v109.2h-6.2zM1047.2 926.0h6.2v110.3h-6.2zM1055.5 926.0h6.2v110.3h-6.2zM1063.8 926.0h6.2v110.3h-6.2zM1072.1 926.0h6.2v110.3h-6.2zM1080.4 926.0h6.2v110.3h-6.2zM1088.7 925.0h6.2v111.3h-6.2zM1097.0 925.0h6.2v111.3h-6.2zM1105.3 925.0h6.2v111.3h-6.2zM1113.7 925.0h6.2v111.3h-6.2zM1122.0 925.0h6.2v111.3h-6.2zM1130.3 924.0h6.2v112.3h-6.2zM1138.6 924.0h6.2v112.3h-6.2zM1146.9 924.0h6.2v112.3h-6.2zM1155.2 924.0h6.2v112.3h-6.2zM1163.5 924.0h6.2v112.3h-6.2zM1171.8 923.0h6.2v113.3h-6.2zM1180.1 923.0h6.2v113.3h-6.2zM1188.4 923.0h6.2v113.3h-6.2zM1196.8 923.0h6.2v113.3h-6.2zM1205.1 923.0h6.2v113.3h-6.2zM1213.4 922.0h6.2v114.3h-6.2zM1221.7 922.0h6.2v114.3h-6.2zM1230.0 922.0h6.2v114.3h-6.2zM1238.3 922.0h6.2v114.3h-6.2zM1246.6 922.0h6.2v114.3h-6.2zM1254.9 921.0h6.2v115.3h-6.2zM1263.2 921.0h6.2v115.3h-6.2zM1271.5 921.0h6.2v115.3h-6.2zM1279.9 921.0h6.2v115.3h-6.2zM1288.2 921.0h6.2v115.3h-6.2zM1296.5 920.0h6.2v116.3h-6.2zM1304.8 920.0h6.2v116.3h-6.2zM1313.1 920.0h6.2v116.3h-6.2zM1321.4 920.0h6.2v116.3h-6.2zM1329.7 920.0h6.2v116.3h-6.2zM1338.0 919.0h6.2v117.3h-6.2zM1346.3 919.0h6.2v117.3h-6.2zM1354.6 919.0h6.2v117.3h-6.2zM1363.0 919.0h6.2v117.3h-6.2zM1371.3 919.0h6.2v117.3h-6.2zM1379.6 918.0h6.2v118.3h-6.2zM1387.9 918.0h6.2v118.3h-6.2zM1396.2 918.0h6.2v118.3h-6.2zM1404.5 918.0h6.2v118.3h-6.2zM1412.8 918.0h6.2v118.3h-6.2zM1421.1 911.2h6.2v125.1h-6.2zM1429.4 905.6h6.2v130.7h-6.2zM1437.7 905.6h6.2v130.7h-6.2zM1446.1 899.5h6.2v136.8h-6.2zM1454.4 894.0h6.2v142.3h-6.2zM1462.7 886.5h6.2v149.8h-6.2zM1471.0 884.2h6.2v152.1h-6.2zM1479.3 884.2h6.2v152.1h-6.2zM1487.6 882.0h6.2v154.3h-6.2zM1495.9 880.3h6.2v156.0h-6.2zM1504.2 873.9h6.2v162.4h-6.2zM1512.5 869.3h6.2v167.0h-6.2zM1520.8 869.3h6.2v167.0h-6.2zM1529.2 865.4h6.2v170.9h-6.2zM1537.5 863.2h6.2v173.1h-6.2zM1545.8 858.0h6.2v178.3h-6.2zM1554.1 856.3h6.2v180.0h-6.2zM1562.4 856.3h6.2v180.0h-6.2zM1570.7 854.1h6.2v182.2h-6.2zM1579.0 851.8h6.2v184.5h-6.2zM1587.3 849.2h6.2v187.1h-6.2zM1595.6 846.9h6.2v189.4h-6.2zM1603.9 846.9h6.2v189.4h-6.2zM1612.2 846.0h6.2v190.3h-6.2zM1620.6 845.3h6.2v191.0h-6.2zM1628.9 838.8h6.2v197.5h-6.2zM1637.2 835.3h6.2v201.0h-6.2zM1645.5 835.3h6.2v201.0h-6.2zM1653.8 835.3h6.2v201.0h-6.2z"/><path fill="#f0902f" d="M565.2 951.0h6.2v2h-6.2zM573.5 935.4h6.2v2h-6.2zM581.8 935.4h6.2v2h-6.2zM590.1 935.4h6.2v2h-6.2zM598.4 935.4h6.2v2h-6.2zM606.7 935.4h6.2v2h-6.2zM615.0 934.4h6.2v2h-6.2zM623.4 934.4h6.2v2h-6.2zM631.7 934.4h6.2v2h-6.2zM640.0 934.4h6.2v2h-6.2zM648.3 934.4h6.2v2h-6.2zM656.6 933.3h6.2v2h-6.2zM664.9 933.3h6.2v2h-6.2zM673.2 933.3h6.2v2h-6.2zM681.5 933.3h6.2v2h-6.2zM689.8 933.3h6.2v2h-6.2zM698.1 932.3h6.2v2h-6.2zM706.5 932.3h6.2v2h-6.2zM714.8 932.3h6.2v2h-6.2zM723.1 932.3h6.2v2h-6.2zM731.4 932.3h6.2v2h-6.2zM739.7 931.2h6.2v2h-6.2zM748.0 931.2h6.2v2h-6.2zM756.3 931.2h6.2v2h-6.2zM764.6 931.2h6.2v2h-6.2zM772.9 931.2h6.2v2h-6.2zM781.2 930.2h6.2v2h-6.2zM789.6 930.2h6.2v2h-6.2zM797.9 930.2h6.2v2h-6.2zM806.2 930.2h6.2v2h-6.2zM814.5 930.2h6.2v2h-6.2zM822.8 929.1h6.2v2h-6.2zM831.1 929.1h6.2v2h-6.2zM839.4 929.1h6.2v2h-6.2zM847.7 929.1h6.2v2h-6.2zM856.0 929.1h6.2v2h-6.2zM864.4 928.1h6.2v2h-6.2zM872.7 928.1h6.2v2h-6.2zM881.0 928.1h6.2v2h-6.2zM889.3 928.1h6.2v2h-6.2zM897.6 928.1h6.2v2h-6.2zM905.9 927.0h6.2v2h-6.2zM1005.6 925.1h6.2v2h-6.2zM1013.9 925.1h6.2v2h-6.2zM1022.2 925.1h6.2v2h-6.2zM1030.6 925.1h6.2v2h-6.2zM1038.9 925.1h6.2v2h-6.2zM1047.2 924.0h6.2v2h-6.2zM1055.5 924.0h6.2v2h-6.2zM1063.8 924.0h6.2v2h-6.2zM1072.1 924.0h6.2v2h-6.2zM1080.4 924.0h6.2v2h-6.2zM1088.7 923.0h6.2v2h-6.2zM1097.0 923.0h6.2v2h-6.2zM1105.3 923.0h6.2v2h-6.2zM1113.7 923.0h6.2v2h-6.2zM1122.0 923.0h6.2v2h-6.2zM1130.3 922.0h6.2v2h-6.2zM1138.6 922.0h6.2v2h-6.2zM1146.9 922.0h6.2v2h-6.2zM1155.2 922.0h6.2v2h-6.2zM1163.5 922.0h6.2v2h-6.2zM1171.8 921.0h6.2v2h-6.2zM1180.1 921.0h6.2v2h-6.2zM1188.4 921.0h6.2v2h-6.2zM1196.8 921.0h6.2v2h-6.2zM1205.1 921.0h6.2v2h-6.2zM1213.4 920.0h6.2v2h-6.2zM1221.7 920.0h6.2v2h-6.2zM1230.0 920.0h6.2v2h-6.2zM1238.3 920.0h6.2v2h-6.2zM1246.6 920.0h6.2v2h-6.2zM1254.9 919.0h6.2v2h-6.2zM1263.2 919.0h6.2v2h-6.2zM1271.5 919.0h6.2v2h-6.2zM1279.9 919.0h6.2v2h-6.2zM1288.2 919.0h6.2v2h-6.2zM1296.5 918.0h6.2v2h-6.2zM1304.8 918.0h6.2v2h-6.2zM1313.1 918.0h6.2v2h-6.2zM1321.4 918.0h6.2v2h-6.2zM1329.7 918.0h6.2v2h-6.2zM1338.0 917.0h6.2v2h-6.2zM1346.3 917.0h6.2v2h-6.2zM1354.6 917.0h6.2v2h-6.2zM1363.0 917.0h6.2v2h-6.2zM1371.3 917.0h6.2v2h-6.2zM1379.6 916.0h6.2v2h-6.2zM1387.9 916.0h6.2v2h-6.2zM1396.2 916.0h6.2v2h-6.2zM1404.5 916.0h6.2v2h-6.2zM1412.8 916.0h6.2v2h-6.2zM1421.1 909.2h6.2v2h-6.2zM1429.4 903.6h6.2v2h-6.2zM1437.7 903.6h6.2v2h-6.2zM1446.1 897.5h6.2v2h-6.2zM1454.4 892.0h6.2v2h-6.2zM1462.7 884.5h6.2v2h-6.2zM1471.0 882.2h6.2v2h-6.2zM1479.3 882.2h6.2v2h-6.2zM1487.6 880.0h6.2v2h-6.2zM1495.9 878.3h6.2v2h-6.2zM1504.2 871.9h6.2v2h-6.2zM1512.5 867.3h6.2v2h-6.2zM1520.8 867.3h6.2v2h-6.2zM1529.2 863.4h6.2v2h-6.2zM1537.5 861.2h6.2v2h-6.2zM1545.8 856.0h6.2v2h-6.2zM1554.1 854.3h6.2v2h-6.2zM1562.4 854.3h6.2v2h-6.2zM1570.7 852.1h6.2v2h-6.2zM1579.0 849.8h6.2v2h-6.2zM1587.3 847.2h6.2v2h-6.2zM1595.6 844.9h6.2v2h-6.2zM1603.9 844.9h6.2v2h-6.2zM1612.2 844.0h6.2v2h-6.2zM1620.6 843.3h6.2v2h-6.2zM1628.9 836.8h6.2v2h-6.2zM1637.2 833.3h6.2v2h-6.2zM1645.5 833.3h6.2v2h-6.2zM1653.8 833.3h6.2v2h-6.2z"/><text x="157.8" y="1063.6" font-size="21" fill="#828282" text-anchor="middle" font-weight="normal" font-family="Liberation Sans" letter-spacing="1">08:34</text><text x="324.5" y="1063.6" font-size="21" fill="#828282" text-anchor="middle" font-weight="normal" font-family="Liberation Sans" letter-spacing="1">08:54</text><text x="491.2" y="1063.6" font-size="21" fill="#828282" text-anchor="middle" font-weight="normal" font-family="Liberation Sans" letter-spacing="1">09:14</text><text x="657.9" y="1063.6" font-size="21" fill="#828282" text-anchor="middle" font-weight="normal" font-family="Liberation Sans" letter-spacing="1">09:34</text><text x="824.6" y="1063.6" font-size="21" fill="#828282" text-anchor="middle" font-weight="normal" font-family="Liberation Sans" letter-spacing="1">09:54</text><text x="991.3" y="1063.6" font-size="21" fill="#828282" text-anchor="middle" font-weight="normal" font-family="Liberation Sans" letter-spacing="1">10:14</text><text x="1158.0" y="1063.6" font-size="21" fill="#828282" text-anchor="middle" font-weight="normal" font-family="Liberation Sans" letter-spacing="1">10:34</text><text x="1324.7" y="1063.6" font-size="21" fill="#828282" text-anchor="middle" font-weight="normal" font-family="Liberation Sans" letter-spacing="1">10:54</text><text x="1491.4" y="1063.6" font-size="21" fill="#828282" text-anchor="middle" font-weight="normal" font-family="Liberation Sans" letter-spacing="1">11:14</text><svg x="0" y="0" width="1668" height="1666" overflow="hidden"><text x="1658.1" y="1063.6" font-size="21" fill="#828282" text-anchor="middle" font-weight="normal" font-family="Liberation Sans" letter-spacing="1">11:34</text></svg><rect x="1846.0" y="347.6" width="1480.0" height="2" fill="#262626"/><rect x="1846.0" y="382.1" width="1480.0" height="2" fill="#262626"/><rect x="1846.0" y="416.5" width="1480.0" height="2" fill="#262626"/><rect x="1846.0" y="451.0" width="1480.0" height="2" fill="#262626"/><rect x="1846.0" y="485.4" width="1480.0" height="2" fill="#262626"/><rect x="1846.0" y="519.9" width="1480.0" height="2" fill="#262626"/><text x="1837.5" y="355.6" font-size="21" fill="#828282" text-anchor="end" font-weight="normal" font-family="Liberation Sans" letter-spacing="1">800K</text><text x="1837.5" y="390.1" font-size="21" fill="#828282" text-anchor="end" font-weight="normal" font-family="Liberation Sans" letter-spacing="1">700K</text><text x="1837.5" y="424.5" font-size="21" fill="#828282" text-anchor="end" font-weight="normal" font-family="Liberation Sans" letter-spacing="1">600K</text><text x="1837.5" y="459.0" font-size="21" fill="#828282" text-anchor="end" font-weight="normal" font-family="Liberation Sans" letter-spacing="1">500K</text><text x="1837.5" y="493.4" font-size="21" fill="#828282" text-anchor="end" font-weight="normal" font-family="Liberation Sans" letter-spacing="1">400K</text><text x="1837.5" y="527.9" font-size="21" fill="#828282" text-anchor="end" font-weight="normal" font-family="Liberation Sans" letter-spacing="1">300K</text><path fill="none" stroke="#5b9df7" stroke-width="2.1" stroke-linejoin="round" d="M1866.3,517.8 L1874.4,511.3 L1882.4,504.0 L1890.5,504.0 L1898.6,503.0 L1906.6,497.5 L1914.7,506.1 L1922.8,503.0 L1930.8,505.0 L1938.9,498.5 L1947.0,498.5 L1955.0,504.0 L1963.1,507.8 L1971.2,520.2 L1979.2,519.9 L1987.3,520.6 L1995.4,520.2 L2003.4,520.2 L2011.5,520.2 L2019.6,520.2 L2027.6,520.2 L2035.7,519.9 L2043.8,520.2 L2051.8,520.2 L2059.9,520.6 L2068.0,520.6 L2076.0,520.2 L2084.1,519.9 L2092.2,520.2 L2100.2,520.6 L2108.3,520.2 L2116.4,520.2 L2124.4,519.9 L2132.5,520.2 L2140.6,520.6 L2148.6,520.2 L2156.7,519.9 L2164.8,499.9 L2172.8,417.5 L2180.9,401.3 L2189.0,377.9 L2197.0,415.5 L2205.1,413.4 L2213.2,412.0 L2221.2,412.0 L2229.3,412.0 L2237.4,412.0 L2245.4,412.0 L2253.5,412.0 L2261.6,478.5 L2269.7,504.0 L2277.7,520.2 L2285.8,519.9 L2293.9,520.2 L2301.9,520.6 L2310.0,519.9 L2318.1,520.2 L2326.1,520.2 L2334.2,519.9 L2342.3,520.2 L2350.3,519.9 L2358.4,520.2 L2366.5,520.2 L2374.5,520.2 L2382.6,520.2 L2390.7,519.9 L2398.7,520.6 L2406.8,520.6 L2414.9,520.2 L2422.9,520.6 L2431.0,520.6 L2439.1,520.2 L2447.1,520.2 L2455.2,519.9 L2463.3,519.9 L2471.3,519.9 L2479.4,520.2 L2487.5,520.2 L2495.5,520.6 L2503.6,520.2 L2511.7,520.6 L2519.7,520.2 L2527.8,520.2 L2535.9,520.2 L2543.9,520.6 L2552.0,519.9 L2560.1,520.2 L2568.1,519.9 L2576.2,520.6 L2584.3,497.5 L2592.3,444.1 L2600.4,410.3 L2608.5,337.6 L2616.5,345.2 L2624.6,404.8 L2632.7,404.8 L2640.7,404.8 L2648.8,404.8 L2656.9,404.8 L2664.9,404.8 L2673.0,404.8 L2681.1,438.2 L2689.1,475.1 L2697.2,520.9 L2705.3,520.6 L2713.3,520.6 L2721.4,520.6 L2729.5,520.6 L2737.5,520.6 L2745.6,520.9 L2753.7,520.9 L2761.7,520.6 L2769.8,520.6 L2777.9,520.6 L2785.9,520.9 L2794.0,520.6 L2802.1,520.6 L2810.1,520.6 L2818.2,520.9 L2826.3,520.6 L2834.3,520.9 L2842.4,520.6 L2850.5,520.6 L2858.5,520.9 L2866.6,520.6 L2874.7,520.2 L2882.7,520.6 L2890.8,520.9 L2898.9,520.6 L2906.9,520.2 L2915.0,520.6 L2923.1,520.2 L2931.1,520.2 L2939.2,520.9 L2947.3,520.9 L2955.3,520.9 L2963.4,520.6 L2971.5,520.2 L2979.5,520.9 L2987.6,520.9 L2995.7,520.6 L3003.7,520.2 L3011.8,520.9 L3019.9,520.6 L3027.9,520.9 L3036.0,518.5 L3044.1,511.3 L3052.1,507.1 L3060.2,501.9 L3068.3,499.5 L3076.3,496.4 L3084.4,494.4 L3092.5,496.4 L3100.6,499.5 L3108.6,501.9 L3116.7,492.3 L3124.8,496.4 L3132.8,503.0 L3140.9,503.0 L3149.0,503.0 L3157.0,501.6 L3165.1,501.6 L3173.2,503.0 L3181.2,503.0 L3189.3,505.7 L3197.4,505.7 L3205.4,507.8 L3213.5,513.7 L3221.6,515.7 L3229.6,516.4 L3237.7,511.3 L3245.8,505.0 L3253.8,504.0 L3261.9,503.0 L3270.0,503.0 L3278.0,501.6 L3286.1,499.5 L3294.2,500.2 L3302.2,501.9 L3310.3,504.0 L3318.4,503.0"/><rect x="1954.0" y="542" width="2" height="19" fill="#3a3a3a"/><text x="1955.0" y="587.3" font-size="21" fill="#828282" text-anchor="middle" font-weight="normal" font-family="Liberation Sans" letter-spacing="1">08:45</text><rect x="2075.0" y="542" width="2" height="19" fill="#3a3a3a"/><text x="2076.0" y="587.3" font-size="21" fill="#828282" text-anchor="middle" font-weight="normal" font-family="Liberation Sans" letter-spacing="1">09:00</text><rect x="2196.0" y="542" width="2" height="19" fill="#3a3a3a"/><text x="2197.0" y="587.3" font-size="21" fill="#828282" text-anchor="middle" font-weight="normal" font-family="Liberation Sans" letter-spacing="1">09:15</text><rect x="2317.0" y="542" width="2" height="19" fill="#3a3a3a"/><text x="2318.0" y="587.3" font-size="21" fill="#828282" text-anchor="middle" font-weight="normal" font-family="Liberation Sans" letter-spacing="1">09:30</text><rect x="2438.0" y="542" width="2" height="19" fill="#3a3a3a"/><text x="2439.0" y="587.3" font-size="21" fill="#828282" text-anchor="middle" font-weight="normal" font-family="Liberation Sans" letter-spacing="1">09:45</text><rect x="2559.0" y="542" width="2" height="19" fill="#3a3a3a"/><text x="2560.0" y="587.3" font-size="21" fill="#828282" text-anchor="middle" font-weight="normal" font-family="Liberation Sans" letter-spacing="1">10:00</text><rect x="2680.0" y="542" width="2" height="19" fill="#3a3a3a"/><text x="2681.0" y="587.3" font-size="21" fill="#828282" text-anchor="middle" font-weight="normal" font-family="Liberation Sans" letter-spacing="1">10:15</text><rect x="2801.0" y="542" width="2" height="19" fill="#3a3a3a"/><text x="2802.0" y="587.3" font-size="21" fill="#828282" text-anchor="middle" font-weight="normal" font-family="Liberation Sans" letter-spacing="1">10:30</text><rect x="2922.0" y="542" width="2" height="19" fill="#3a3a3a"/><text x="2923.0" y="587.3" font-size="21" fill="#828282" text-anchor="middle" font-weight="normal" font-family="Liberation Sans" letter-spacing="1">10:45</text><rect x="3043.0" y="542" width="2" height="19" fill="#3a3a3a"/><text x="3044.0" y="587.3" font-size="21" fill="#828282" text-anchor="middle" font-weight="normal" font-family="Liberation Sans" letter-spacing="1">11:00</text><rect x="3164.0" y="542" width="2" height="19" fill="#3a3a3a"/><text x="3165.0" y="587.3" font-size="21" fill="#828282" text-anchor="middle" font-weight="normal" font-family="Liberation Sans" letter-spacing="1">11:15</text><rect x="3285.0" y="542" width="2" height="19" fill="#3a3a3a"/><text x="3286.0" y="587.3" font-size="21" fill="#828282" text-anchor="middle" font-weight="normal" font-family="Liberation Sans" letter-spacing="1">11:30</text><rect x="1846.0" y="841.8" width="1480.0" height="2" fill="#262626"/><rect x="1846.0" y="874.2" width="1480.0" height="2" fill="#262626"/><rect x="1846.0" y="906.6" width="1480.0" height="2" fill="#262626"/><rect x="1846.0" y="939.0" width="1480.0" height="2" fill="#262626"/><rect x="1846.0" y="971.4" width="1480.0" height="2" fill="#262626"/><rect x="1846.0" y="1003.8" width="1480.0" height="2" fill="#262626"/><rect x="1846.0" y="1036.2" width="1480.0" height="2" fill="#262626"/><text x="1837.5" y="849.8" font-size="21" fill="#828282" text-anchor="end" font-weight="normal" font-family="Liberation Sans" letter-spacing="1">600K</text><text x="1837.5" y="882.2" font-size="21" fill="#828282" text-anchor="end" font-weight="normal" font-family="Liberation Sans" letter-spacing="1">500K</text><text x="1837.5" y="914.6" font-size="21" fill="#828282" text-anchor="end" font-weight="normal" font-family="Liberation Sans" letter-spacing="1">400K</text><text x="1837.5" y="947.0" font-size="21" fill="#828282" text-anchor="end" font-weight="normal" font-family="Liberation Sans" letter-spacing="1">300K</text><text x="1837.5" y="979.4" font-size="21" fill="#828282" text-anchor="end" font-weight="normal" font-family="Liberation Sans" letter-spacing="1">200K</text><text x="1837.5" y="1011.8" font-size="21" fill="#828282" text-anchor="end" font-weight="normal" font-family="Liberation Sans" letter-spacing="1">100K</text><text x="1837.5" y="1044.2" font-size="21" fill="#828282" text-anchor="end" font-weight="normal" font-family="Liberation Sans" letter-spacing="1">0</text><path fill="none" stroke="#5b9df7" stroke-width="2.1" stroke-linejoin="round" d="M1866.3,985.4 L1874.4,983.7 L1882.4,983.7 L1890.5,983.7 L1898.6,983.7 L1906.6,983.7 L1914.7,997.7 L1922.8,1003.8 L1930.8,1013.5 L1938.9,1013.5 L1947.0,1013.5 L1955.0,1017.8 L1963.1,1020.4 L1971.2,1028.5 L1979.2,1028.8 L1987.3,1028.8 L1995.4,1028.9 L2003.4,1028.9 L2011.5,1029.0 L2019.6,1029.0 L2027.6,1029.1 L2035.7,1029.2 L2043.8,1029.2 L2051.8,1029.3 L2059.9,1029.3 L2068.0,1029.4 L2076.0,1029.4 L2084.1,1029.5 L2092.2,1029.5 L2100.2,1029.6 L2108.3,1029.6 L2116.4,1029.7 L2124.4,1029.7 L2132.5,1029.8 L2140.6,1029.9 L2148.6,1029.9 L2156.7,1030.0 L2164.8,1030.0 L2172.8,1031.7 L2180.9,1035.3 L2189.0,1036.2 L2197.0,1037.2 L2205.1,1037.2 L2213.2,1037.2 L2221.2,1037.2 L2229.3,1037.2 L2237.4,1037.2 L2245.4,1037.2 L2253.5,976.9 L2261.6,952.0 L2269.7,936.4 L2277.7,936.4 L2285.8,936.4 L2293.9,936.4 L2301.9,936.4 L2310.0,935.4 L2318.1,935.4 L2326.1,935.4 L2334.2,935.4 L2342.3,935.4 L2350.3,934.3 L2358.4,934.3 L2366.5,934.3 L2374.5,934.3 L2382.6,934.3 L2390.7,933.3 L2398.7,933.3 L2406.8,933.3 L2414.9,933.3 L2422.9,933.3 L2431.0,932.2 L2439.1,932.2 L2447.1,932.2 L2455.2,932.2 L2463.3,932.2 L2471.3,931.2 L2479.4,931.2 L2487.5,931.2 L2495.5,931.2 L2503.6,931.2 L2511.7,930.1 L2519.7,930.1 L2527.8,930.1 L2535.9,930.1 L2543.9,930.1 L2552.0,929.1 L2560.1,929.1 L2568.1,929.1 L2576.2,929.1 L2584.3,929.1 L2592.3,928.0 L2600.4,992.5 L2608.5,1018.4 L2616.5,1035.6 L2624.6,1037.2 L2632.7,1037.2 L2640.7,1037.2 L2648.8,1037.2 L2656.9,1037.2 L2664.9,1037.2 L2673.0,1005.8 L2681.1,970.8 L2689.1,926.1 L2697.2,926.1 L2705.3,926.1 L2713.3,926.1 L2721.4,926.1 L2729.5,925.1 L2737.5,925.1 L2745.6,925.1 L2753.7,925.1 L2761.7,925.1 L2769.8,924.1 L2777.9,924.1 L2785.9,924.1 L2794.0,924.1 L2802.1,924.1 L2810.1,923.1 L2818.2,923.1 L2826.3,923.1 L2834.3,923.1 L2842.4,923.1 L2850.5,922.1 L2858.5,922.1 L2866.6,922.1 L2874.7,922.1 L2882.7,922.1 L2890.8,921.0 L2898.9,921.0 L2906.9,921.0 L2915.0,921.0 L2923.1,921.0 L2931.1,920.0 L2939.2,920.0 L2947.3,920.0 L2955.3,920.0 L2963.4,920.0 L2971.5,919.0 L2979.5,919.0 L2987.6,919.0 L2995.7,919.0 L3003.7,919.0 L3011.8,918.0 L3019.9,918.0 L3027.9,918.0 L3036.0,918.0 L3044.1,918.0 L3052.1,917.0 L3060.2,917.0 L3068.3,917.0 L3076.3,917.0 L3084.4,917.0 L3092.5,910.2 L3100.6,904.7 L3108.6,904.7 L3116.7,898.5 L3124.8,893.0 L3132.8,885.6 L3140.9,883.3 L3149.0,883.3 L3157.0,881.0 L3165.1,879.4 L3173.2,872.9 L3181.2,868.4 L3189.3,868.4 L3197.4,864.5 L3205.4,862.2 L3213.5,857.1 L3221.6,855.4 L3229.6,855.4 L3237.7,853.2 L3245.8,850.9 L3253.8,848.3 L3261.9,846.0 L3270.0,846.0 L3278.0,845.1 L3286.1,844.4 L3294.2,837.9 L3302.2,834.4 L3310.3,834.4 L3318.4,834.4"/><rect x="1954.0" y="1038" width="2" height="19" fill="#3a3a3a"/><text x="1955.0" y="1083.6" font-size="21" fill="#828282" text-anchor="middle" font-weight="normal" font-family="Liberation Sans" letter-spacing="1">08:45</text><rect x="2075.0" y="1038" width="2" height="19" fill="#3a3a3a"/><text x="2076.0" y="1083.6" font-size="21" fill="#828282" text-anchor="middle" font-weight="normal" font-family="Liberation Sans" letter-spacing="1">09:00</text><rect x="2196.0" y="1038" width="2" height="19" fill="#3a3a3a"/><text x="2197.0" y="1083.6" font-size="21" fill="#828282" text-anchor="middle" font-weight="normal" font-family="Liberation Sans" letter-spacing="1">09:15</text><rect x="2317.0" y="1038" width="2" height="19" fill="#3a3a3a"/><text x="2318.0" y="1083.6" font-size="21" fill="#828282" text-anchor="middle" font-weight="normal" font-family="Liberation Sans" letter-spacing="1">09:30</text><rect x="2438.0" y="1038" width="2" height="19" fill="#3a3a3a"/><text x="2439.0" y="1083.6" font-size="21" fill="#828282" text-anchor="middle" font-weight="normal" font-family="Liberation Sans" letter-spacing="1">09:45</text><rect x="2559.0" y="1038" width="2" height="19" fill="#3a3a3a"/><text x="2560.0" y="1083.6" font-size="21" fill="#828282" text-anchor="middle" font-weight="normal" font-family="Liberation Sans" letter-spacing="1">10:00</text><rect x="2680.0" y="1038" width="2" height="19" fill="#3a3a3a"/><text x="2681.0" y="1083.6" font-size="21" fill="#828282" text-anchor="middle" font-weight="normal" font-family="Liberation Sans" letter-spacing="1">10:15</text><rect x="2801.0" y="1038" width="2" height="19" fill="#3a3a3a"/><text x="2802.0" y="1083.6" font-size="21" fill="#828282" text-anchor="middle" font-weight="normal" font-family="Liberation Sans" letter-spacing="1">10:30</text><rect x="2922.0" y="1038" width="2" height="19" fill="#3a3a3a"/><text x="2923.0" y="1083.6" font-size="21" fill="#828282" text-anchor="middle" font-weight="normal" font-family="Liberation Sans" letter-spacing="1">10:45</text><rect x="3043.0" y="1038" width="2" height="19" fill="#3a3a3a"/><text x="3044.0" y="1083.6" font-size="21" fill="#828282" text-anchor="middle" font-weight="normal" font-family="Liberation Sans" letter-spacing="1">11:00</text><rect x="3164.0" y="1038" width="2" height="19" fill="#3a3a3a"/><text x="3165.0" y="1083.6" font-size="21" fill="#828282" text-anchor="middle" font-weight="normal" font-family="Liberation Sans" letter-spacing="1">11:15</text><rect x="3285.0" y="1038" width="2" height="19" fill="#3a3a3a"/><text x="3286.0" y="1083.6" font-size="21" fill="#828282" text-anchor="middle" font-weight="normal" font-family="Liberation Sans" letter-spacing="1">11:30</text><rect x="138.0" y="1325.7" width="1480.0" height="2" fill="#262626"/><rect x="138.0" y="1367.0" width="1480.0" height="2" fill="#262626"/><rect x="138.0" y="1408.3" width="1480.0" height="2" fill="#262626"/><rect x="138.0" y="1449.6" width="1480.0" height="2" fill="#262626"/><rect x="138.0" y="1491.0" width="1480.0" height="2" fill="#262626"/><rect x="138.0" y="1532.3" width="1480.0" height="2" fill="#262626"/><text x="129.5" y="1333.7" font-size="21" fill="#828282" text-anchor="end" font-weight="normal" font-family="Liberation Sans" letter-spacing="1">50M</text><text x="129.5" y="1375.0" font-size="21" fill="#828282" text-anchor="end" font-weight="normal" font-family="Liberation Sans" letter-spacing="1">40M</text><text x="129.5" y="1416.3" font-size="21" fill="#828282" text-anchor="end" font-weight="normal" font-family="Liberation Sans" letter-spacing="1">30M</text><text x="129.5" y="1457.6" font-size="21" fill="#828282" text-anchor="end" font-weight="normal" font-family="Liberation Sans" letter-spacing="1">20M</text><text x="129.5" y="1499.0" font-size="21" fill="#828282" text-anchor="end" font-weight="normal" font-family="Liberation Sans" letter-spacing="1">10M</text><text x="129.5" y="1540.3" font-size="21" fill="#828282" text-anchor="end" font-weight="normal" font-family="Liberation Sans" letter-spacing="1">0</text><path fill="none" stroke="#e35fb5" stroke-width="2.1" stroke-linejoin="round" d="M158.3,1475.0 L173.6,1475.0 L181.7,1473.4 L206.7,1473.4 L222.0,1491.2 L247.0,1491.2 L262.4,1515.1 L271.2,1517.6 L456.8,1524.2 L476.9,1525.0 L489.0,1533.3 L561.7,1533.3 L577.8,1532.5 L906.9,1525.9 L914.2,1533.3 L981.1,1533.3 L997.3,1532.5 L1344.1,1525.9 L1359.5,1524.2 L1383.7,1524.2 L1390.9,1504.4 L1398.2,1440.7 L1422.4,1440.7 L1432.1,1433.3 L1441.0,1412.6 L1463.5,1412.6 L1472.4,1407.7 L1480.5,1394.1 L1504.7,1394.1 L1520.8,1387.0 L1543.4,1387.0 L1562.0,1376.7 L1586.2,1376.7 L1595.0,1371.3 L1603.1,1358.1 L1610.4,1358.1"/><path fill="none" stroke="#f08d2e" stroke-width="2.1" stroke-linejoin="round" d="M158.3,1471.7 L166.4,1467.6 L206.7,1467.6 L214.0,1492.4 L222.0,1497.8 L247.0,1497.8 L256.7,1515.9 L263.2,1518.4 L456.8,1521.3 L472.1,1522.1 L480.2,1533.3 L554.4,1533.3 L562.5,1515.1 L570.5,1506.9 L868.2,1501.1 L891.6,1501.1 L898.9,1509.3 L906.9,1533.3 L981.1,1533.3 L988.4,1508.5 L1374.0,1499.8 L1383.7,1492.4 L1390.9,1420.5 L1413.5,1420.5 L1424.0,1413.9 L1432.1,1387.0 L1461.9,1385.8 L1472.4,1374.2 L1501.5,1374.2 L1511.9,1362.2 L1541.0,1360.6 L1553.1,1351.5 L1577.3,1351.5 L1584.5,1348.6 L1592.6,1334.1 L1610.4,1335.0"/><path fill="none" stroke="#4fbb78" stroke-width="2.1" stroke-linejoin="round" d="M158.3,1467.6 L166.4,1465.9 L198.6,1465.9 L206.7,1487.0 L215.6,1497.8 L240.6,1497.8 L253.5,1515.9 L263.2,1518.8 L456.8,1521.7 L473.7,1533.3 L543.9,1533.3 L560.8,1497.8 L884.3,1490.7 L898.9,1533.3 L969.0,1533.3 L981.1,1496.9 L990.0,1492.4 L1375.6,1485.0 L1383.7,1446.9 L1413.5,1446.9 L1424.0,1396.9 L1456.3,1396.9 L1465.2,1389.5 L1495.0,1389.5 L1504.7,1375.9 L1536.1,1375.9 L1545.0,1365.1 L1577.3,1365.1 L1586.2,1356.9 L1610.4,1356.9"/><path fill="none" stroke="#a66ef2" stroke-width="2.1" stroke-linejoin="round" d="M158.3,1473.0 L166.4,1469.7 L190.6,1469.7 L198.6,1479.6 L206.7,1500.2 L230.9,1500.2 L243.8,1515.9 L255.1,1519.3 L456.8,1522.1 L470.5,1533.3 L541.5,1533.3 L543.9,1522.6 L552.8,1490.3 L874.6,1482.5 L882.7,1487.0 L888.4,1533.3 L962.6,1533.3 L979.5,1487.8 L1368.3,1478.8 L1374.0,1466.8 L1383.7,1456.0 L1407.9,1456.0 L1415.1,1399.8 L1422.4,1380.4 L1448.2,1380.4 L1457.9,1372.6 L1486.1,1371.3 L1495.0,1360.6 L1525.7,1357.7 L1536.1,1345.3 L1567.6,1344.5 L1582.9,1338.7 L1610.4,1338.7"/><path fill="none" stroke="#5b9df7" stroke-width="2.1" stroke-linejoin="round" d="M158.3,1470.1 L166.4,1468.4 L190.6,1468.4 L198.6,1502.7 L206.7,1509.3 L230.9,1509.3 L239.0,1517.6 L247.0,1519.3 L319.6,1520.9 L456.8,1523.0 L464.8,1533.3 L537.4,1533.3 L543.9,1498.6 L553.6,1492.4 L874.6,1483.3 L890.8,1533.3 L956.9,1533.3 L973.1,1489.5 L1368.3,1478.8 L1398.2,1478.8 L1415.1,1372.6 L1441.0,1372.6 L1456.3,1365.1 L1480.5,1365.1 L1495.0,1346.9 L1520.8,1346.9 L1536.1,1335.8 L1562.0,1335.8 L1577.3,1331.2 L1610.4,1331.2"/><rect x="246.0" y="1535" width="2" height="19" fill="#3a3a3a"/><text x="247.0" y="1579.6" font-size="21" fill="#828282" text-anchor="middle" font-weight="normal" font-family="Liberation Sans" letter-spacing="1">08:45</text><rect x="367.0" y="1535" width="2" height="19" fill="#3a3a3a"/><text x="368.0" y="1579.6" font-size="21" fill="#828282" text-anchor="middle" font-weight="normal" font-family="Liberation Sans" letter-spacing="1">09:00</text><rect x="488.0" y="1535" width="2" height="19" fill="#3a3a3a"/><text x="489.0" y="1579.6" font-size="21" fill="#828282" text-anchor="middle" font-weight="normal" font-family="Liberation Sans" letter-spacing="1">09:15</text><rect x="609.0" y="1535" width="2" height="19" fill="#3a3a3a"/><text x="610.0" y="1579.6" font-size="21" fill="#828282" text-anchor="middle" font-weight="normal" font-family="Liberation Sans" letter-spacing="1">09:30</text><rect x="730.0" y="1535" width="2" height="19" fill="#3a3a3a"/><text x="731.0" y="1579.6" font-size="21" fill="#828282" text-anchor="middle" font-weight="normal" font-family="Liberation Sans" letter-spacing="1">09:45</text><rect x="851.0" y="1535" width="2" height="19" fill="#3a3a3a"/><text x="852.0" y="1579.6" font-size="21" fill="#828282" text-anchor="middle" font-weight="normal" font-family="Liberation Sans" letter-spacing="1">10:00</text><rect x="972.0" y="1535" width="2" height="19" fill="#3a3a3a"/><text x="973.0" y="1579.6" font-size="21" fill="#828282" text-anchor="middle" font-weight="normal" font-family="Liberation Sans" letter-spacing="1">10:15</text><rect x="1093.0" y="1535" width="2" height="19" fill="#3a3a3a"/><text x="1094.0" y="1579.6" font-size="21" fill="#828282" text-anchor="middle" font-weight="normal" font-family="Liberation Sans" letter-spacing="1">10:30</text><rect x="1214.0" y="1535" width="2" height="19" fill="#3a3a3a"/><text x="1215.0" y="1579.6" font-size="21" fill="#828282" text-anchor="middle" font-weight="normal" font-family="Liberation Sans" letter-spacing="1">10:45</text><rect x="1335.0" y="1535" width="2" height="19" fill="#3a3a3a"/><text x="1336.0" y="1579.6" font-size="21" fill="#828282" text-anchor="middle" font-weight="normal" font-family="Liberation Sans" letter-spacing="1">11:00</text><rect x="1456.0" y="1535" width="2" height="19" fill="#3a3a3a"/><text x="1457.0" y="1579.6" font-size="21" fill="#828282" text-anchor="middle" font-weight="normal" font-family="Liberation Sans" letter-spacing="1">11:15</text><rect x="1577.0" y="1535" width="2" height="19" fill="#3a3a3a"/><text x="1578.0" y="1579.6" font-size="21" fill="#828282" text-anchor="middle" font-weight="normal" font-family="Liberation Sans" letter-spacing="1">11:30</text></svg>
<div class="frameL"></div><div class="frameR"></div>
</body></html>
